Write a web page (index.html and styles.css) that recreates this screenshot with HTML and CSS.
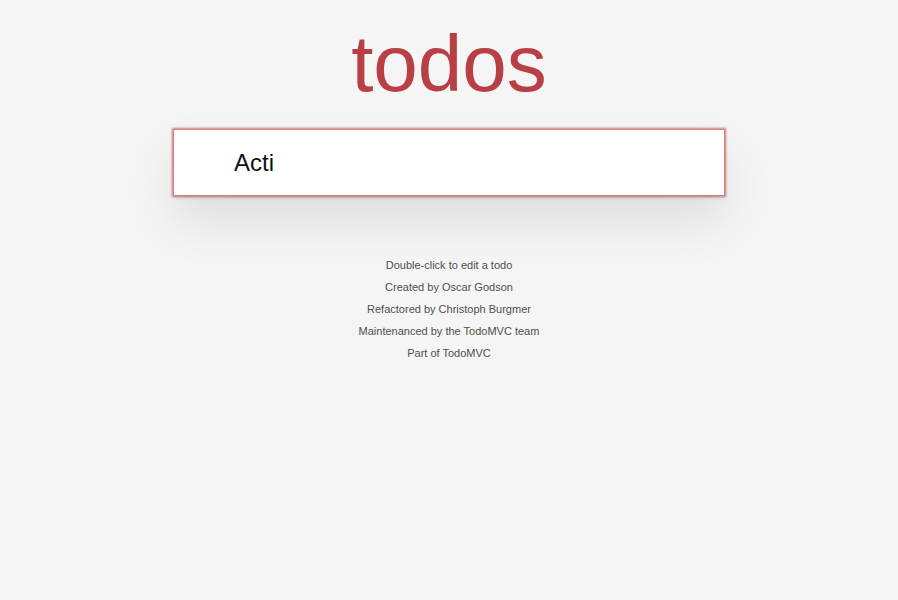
FILE: index.html
```html
<!DOCTYPE html>
<html lang="en">
<head>
<meta charset="utf-8">
<title>todos</title>
<link rel="stylesheet" href="styles.css">
</head>
<body>
<div class="page">
  <h1 class="title">todos</h1>
  <section class="todoapp">
    <input class="new-todo" type="text" value="Acti" placeholder="What needs to be done?">
  </section>
  <footer class="info">
    <p>Double-click to edit a todo</p>
    <p>Created by Oscar Godson</p>
    <p>Refactored by Christoph Burgmer</p>
    <p>Maintenanced by the TodoMVC team</p>
    <p>Part of TodoMVC</p>
  </footer>
</div>
</body>
</html>
```

FILE: styles.css
```css
html, body {
  margin: 0;
  padding: 0;
}
body {
  background: #f5f5f5;
  color: #111;
  font-family: "Liberation Sans", Arial, sans-serif;
  font-size: 14px;
  line-height: 1.4em;
}
.page {
  width: 550px;
  margin: 0 auto;
  padding-top: 24px;
}
.title {
  margin: 0 0 26px;
  font-size: 80px;
  line-height: 80px;
  font-weight: 200;
  color: #b83f45;
  text-align: center;
}
.todoapp {
  background: #fff;
  margin: 0 0 40px;
  box-shadow: 0 2px 4px rgba(0,0,0,0.2), 0 25px 50px 0 rgba(0,0,0,0.1);
}
.new-todo {
  display: block;
  box-sizing: border-box;
  width: 100%;
  height: 65px;
  margin: 0;
  padding: 16px 16px 16px 60px;
  border: none;
  background: #fff;
  font-family: "Liberation Sans", Arial, sans-serif;
  font-size: 24px;
  line-height: 1.4em;
  color: #111;
  outline: 0;
  box-shadow: 0 0 2px 2px #cf7d7d;
}
.info {
  margin: 65px auto 0;
  color: #4d4d4d;
  font-size: 11px;
  text-shadow: 0 1px 0 rgba(255,255,255,0.5);
  text-align: center;
}
.info p {
  line-height: 1;
  margin: 11px 0;
}
```
